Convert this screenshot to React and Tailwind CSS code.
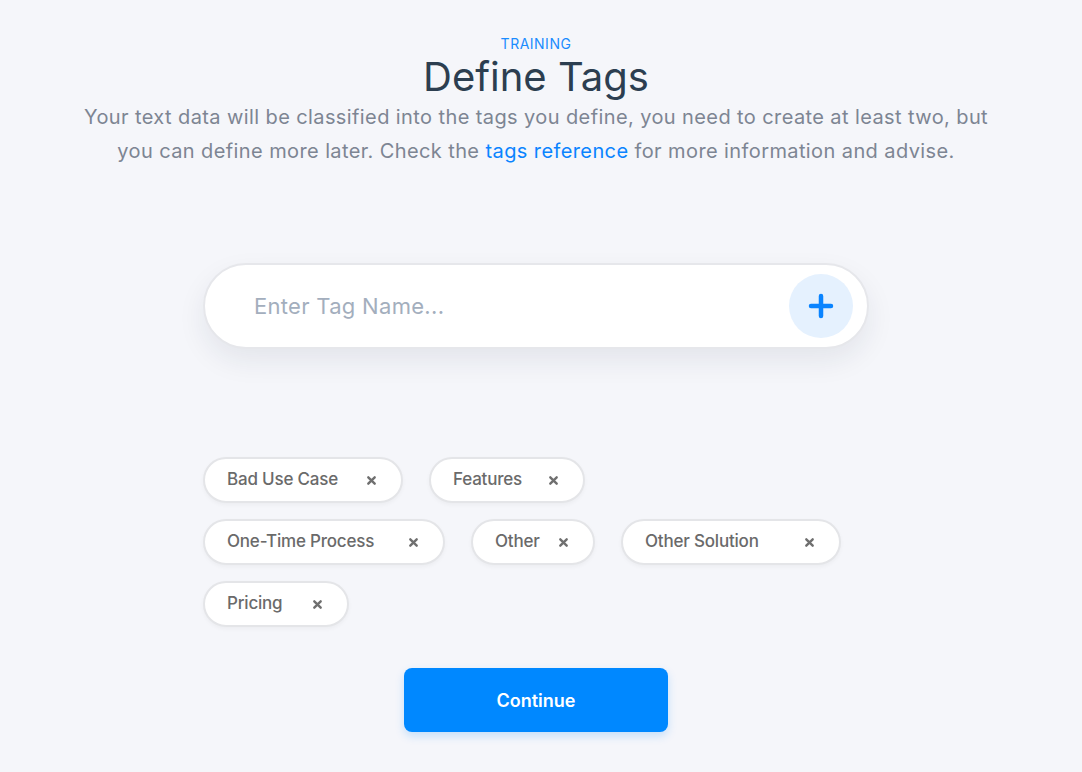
import React from "react";

const tags = [
  { name: "Bad Use Case", w: "w-[200px]" },
  { name: "Features", w: "w-[156px]" },
  { name: "One-Time Process", w: "w-[242px]" },
  { name: "Other", w: "w-[124px]" },
  { name: "Other Solution", w: "w-[220px]" },
  { name: "Pricing", w: "w-[146px]" },
];

function XIcon() {
  return (
    <svg width="11" height="11" viewBox="0 0 12 12" className="shrink-0">
      <path d="M2.5 2.5 L9.5 9.5 M9.5 2.5 L2.5 9.5" stroke="#6f6f6f" strokeWidth="2.6" strokeLinecap="round" />
    </svg>
  );
}

export default function App() {
  return (
    <div
      className="min-h-[772px] w-full bg-[#f5f6fa] pr-[10px]"
      style={{ fontFamily: "Inter, 'Noto Sans', sans-serif" }}
    >
      <div className="flex flex-col items-center">
        <div className="pt-[34px] text-[14px] leading-[20px] text-[#1a8cff] tracking-[0.5px]">TRAINING</div>
        <h1 className="text-[40px] leading-[46px] text-[#2c3e50] font-normal tracking-[0px]">Define Tags</h1>
        <p className="text-[20px] leading-[34px] text-[#7d8593] text-center tracking-[0.4px] whitespace-nowrap">
          Your text data will be classified into the tags you define, you need to create at least two, but
          <br />
          you can define more later. Check the <span className="text-[#0a84ff]">tags reference</span> for more information and advise.
        </p>

        <div className="mt-[95px] w-[666px] h-[86px] rounded-full bg-white border-2 border-[#e6e7eb] shadow-[0_12px_28px_rgba(30,40,70,0.08)] flex items-center pl-[49px] pr-[14px]">
          <span className="flex-1 text-[22px] text-[#a3aebd] tracking-[0.3px]">Enter Tag Name...</span>
          <div className="w-[64px] h-[64px] rounded-full bg-[#e5f1fe] flex items-center justify-center">
            <svg width="28" height="28" viewBox="0 0 28 28">
              <path d="M14 4 V24 M4 14 H24" stroke="#0a84ff" strokeWidth="4.5" strokeLinecap="round" />
            </svg>
          </div>
        </div>

        <div className="mt-[108px] w-[666px]">
          <div className="w-[646px] flex flex-wrap gap-x-[26px] gap-y-[16px]">
            {tags.map((t) => (
              <div
                key={t.name}
                className={`${t.w} h-[46px] rounded-full bg-white border-2 border-[#e4e5e8] shadow-[0_2px_4px_rgba(0,0,0,0.04)] flex items-center justify-between pl-[22px] pr-[24px]`}
              >
                <span className="text-[17px] font-medium text-[#6a6a6a] tracking-[-0.2px]">{t.name}</span>
                <XIcon />
              </div>
            ))}
          </div>
        </div>

        <button className="mt-[41px] w-[264px] h-[64px] rounded-[8px] bg-[#0088ff] text-white text-[18px] font-semibold shadow-[0_4px_10px_rgba(0,136,255,0.2)]">
          Continue
        </button>
      </div>
    </div>
  );
}
